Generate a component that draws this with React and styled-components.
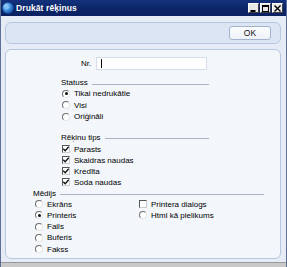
import React from "react";
import styled, { createGlobalStyle } from "styled-components";

const GlobalStyle = createGlobalStyle`
  html, body {
    margin: 0;
    padding: 0;
    background: #e6ecf5;
  }
  * {
    box-sizing: border-box;
  }
`;

const FONT = `"Liberation Sans", Arial, sans-serif`;

const Window = styled.div`
  width: 287px;
  height: 267px;
  display: flex;
  flex-direction: column;
  background: #e6ecf5;
  font-family: ${FONT};
  font-size: 8px;
  color: #000;
  border-left: 1px solid #5d6f95;
  border-right: 1px solid #5d6f95;
  overflow: hidden;
`;

const TitleBar = styled.div`
  height: 16px;
  display: flex;
  align-items: center;
  padding: 0 3px 0 1px;
  background: linear-gradient(#14327c, #0a2466 60%, #0a2262);
  color: #fff;
  font-weight: bold;
  font-size: 8.5px;
  gap: 2px;
`;

const TitleText = styled.span`
  flex: 1;
  letter-spacing: 0.1px;
`;

const WinButtons = styled.div`
  display: flex;
  gap: 1px;
`;

const WinButton = styled.div`
  width: 11px;
  height: 10px;
  background: #e8e8e8;
  border: 1px solid #404040;
  border-top-color: #fff;
  border-left-color: #fff;
  display: flex;
  align-items: center;
  justify-content: center;
  color: #000;
`;

const Body = styled.div`
  flex: 1;
  display: flex;
  flex-direction: column;
  padding: 6px 5px 3px 4px;
  gap: 5px;
`;

const BottomStrip = styled.div`
  height: 5px;
  background: #c9c9c9;
  border-top: 1px solid #9a9a9a;
`;

const TopPanel = styled.div`
  height: 22px;
  border: 1px solid #b7c7e2;
  border-radius: 6px;
  background: #dbe5f4;
  display: flex;
  align-items: center;
  justify-content: flex-end;
  padding-right: 9px;
`;

const OkButton = styled.button`
  width: 42px;
  height: 14px;
  border: 1px solid #a3b3ce;
  border-radius: 3px;
  background: linear-gradient(#fbfcfe, #eef2f8);
  font-family: ${FONT};
  font-size: 8.5px;
  padding: 0;
  color: #111;
`;

const MainPanel = styled.div`
  flex: 1;
  border: 1px solid #b7c7e2;
  border-radius: 6px;
  background: #f3f6fb;
  padding-top: 7px;
  display: flex;
  flex-direction: column;
`;

const NrRow = styled.div`
  height: 13px;
  display: flex;
  align-items: center;
  padding-left: 75px;
  gap: 5px;
`;

const NrLabel = styled.span``;

const NrInput = styled.div`
  width: 111px;
  height: 13px;
  background: #fff;
  border: 1px solid #d3dcea;
  display: flex;
  align-items: center;
  padding-left: 4px;
`;

const Caret = styled.div`
  width: 1px;
  height: 9px;
  background: #000;
`;

const Group = styled.div`
  margin-left: ${({ left }) => left}px;
  width: ${({ width }) => width}px;
  margin-top: ${({ top }) => top || 0}px;
`;

const Header = styled.div`
  height: ${({ h }) => h || 11}px;
  display: flex;
  align-items: center;
  gap: 4px;
`;

const HeaderLine = styled.div`
  flex: 1;
  height: 1px;
  margin-top: 3px;
  background: #a9b2c2;
`;

const Columns = styled.div`
  display: flex;
`;

const Column = styled.div`
  width: ${({ width }) => (width ? `${width}px` : "auto")};
`;

const Row = styled.div`
  height: ${({ h }) => h}px;
  display: flex;
  align-items: center;
  padding-left: ${({ indent }) => indent || 0}px;
  gap: 4px;
`;

const RadioMark = styled.span`
  width: 8px;
  height: 8px;
  border-radius: 50%;
  border: 1px solid;
  border-color: #6e6e6e #e4e4e4 #e4e4e4 #6e6e6e;
  background: #fff;
  display: flex;
  align-items: center;
  justify-content: center;
  flex-shrink: 0;

  &::after {
    content: "";
    width: 3px;
    height: 3px;
    border-radius: 50%;
    background: ${({ checked }) => (checked ? "#111" : "transparent")};
  }
`;

const CheckMark = styled.span`
  width: 8px;
  height: 8px;
  border: 1px solid;
  border-color: #555 #ccc #ccc #555;
  background: #fff;
  display: flex;
  align-items: center;
  justify-content: center;
  flex-shrink: 0;
`;

const Radio = ({ label, checked, h = 11.5, indent }) => (
  <Row h={h} indent={indent}>
    <RadioMark checked={checked} />
    <span>{label}</span>
  </Row>
);

const Check = ({ label, checked, h = 11, indent }) => (
  <Row h={h} indent={indent}>
    <CheckMark>
      {checked && (
        <svg width="6" height="6" viewBox="0 0 6 6">
          <path d="M0.3 2.8 L2.2 4.7 L5.7 0.8" stroke="#111" strokeWidth="1.3" fill="none" />
        </svg>
      )}
    </CheckMark>
    <span>{label}</span>
  </Row>
);

const AppIcon = () => (
  <svg width="12" height="12" viewBox="0 0 12 12">
    <defs>
      <radialGradient id="g" cx="0.35" cy="0.35" r="0.7">
        <stop offset="0" stopColor="#bfe3ff" />
        <stop offset="0.5" stopColor="#3f8fe0" />
        <stop offset="1" stopColor="#1b4fa8" />
      </radialGradient>
    </defs>
    <circle cx="6" cy="6" r="5.5" fill="url(#g)" />
    <path d="M3 4 Q6 2 8 5 Q6 8 3 8" fill="#7cc0f5" opacity="0.7" />
  </svg>
);

export default function App() {
  return (
    <>
      <GlobalStyle />
      <Window>
        <TitleBar>
          <AppIcon />
          <TitleText>Drukāt rēķinus</TitleText>
          <WinButtons>
            <WinButton>
              <svg width="7" height="7" viewBox="0 0 7 7">
                <rect x="0.5" y="5" width="5" height="2" fill="#000" />
              </svg>
            </WinButton>
            <WinButton>
              <svg width="7" height="7" viewBox="0 0 7 7">
                <rect x="0.5" y="0.5" width="6" height="6" fill="none" stroke="#000" />
                <rect x="0.5" y="0.5" width="6" height="1.5" fill="#000" />
              </svg>
            </WinButton>
            <WinButton>
              <svg width="7" height="7" viewBox="0 0 7 7">
                <path d="M0.5 0.5 L6.5 6.5 M6.5 0.5 L0.5 6.5" stroke="#000" strokeWidth="1.4" />
              </svg>
            </WinButton>
          </WinButtons>
        </TitleBar>
        <Body>
          <TopPanel>
            <OkButton>OK</OkButton>
          </TopPanel>
          <MainPanel>
            <NrRow>
              <NrLabel>Nr.</NrLabel>
              <NrInput>
                <Caret />
              </NrInput>
            </NrRow>

            <Group left={55} width={148} top={7}>
              <Header>
                Statuss
                <HeaderLine />
              </Header>
              <Radio label="Tikai nedrukātie" checked indent={1} />
              <Radio label="Visi" indent={1} />
              <Radio label="Oriģināli" indent={1} />
            </Group>

            <Group left={55} width={148} top={8.5}>
              <Header h={12.5}>
                Rēķinu tips
                <HeaderLine />
              </Header>
              <Check label="Parasts" checked indent={1} />
              <Check label="Skaidras naudas" checked indent={1} />
              <Check label="Kredīta" checked indent={1} />
              <Check label="Soda naudas" checked indent={1} />
            </Group>

            <Group left={27} width={231}>
              <Header>
                Mēdijs
                <HeaderLine />
              </Header>
              <Columns>
                <Column width={106}>
                  <Radio label="Ekrāns" h={11.25} indent={2} />
                  <Radio label="Printeris" checked h={11.25} indent={2} />
                  <Radio label="Fails" h={11.25} indent={2} />
                  <Radio label="Buferis" h={11.25} indent={2} />
                  <Radio label="Fakss" h={11.25} indent={2} />
                </Column>
                <Column>
                  <Check label="Printera dialogs" h={11.25} />
                  <Radio label="Html kā pielikums" h={11.25} />
                </Column>
              </Columns>
            </Group>
          </MainPanel>
        </Body>
        <BottomStrip />
      </Window>
    </>
  );
}
